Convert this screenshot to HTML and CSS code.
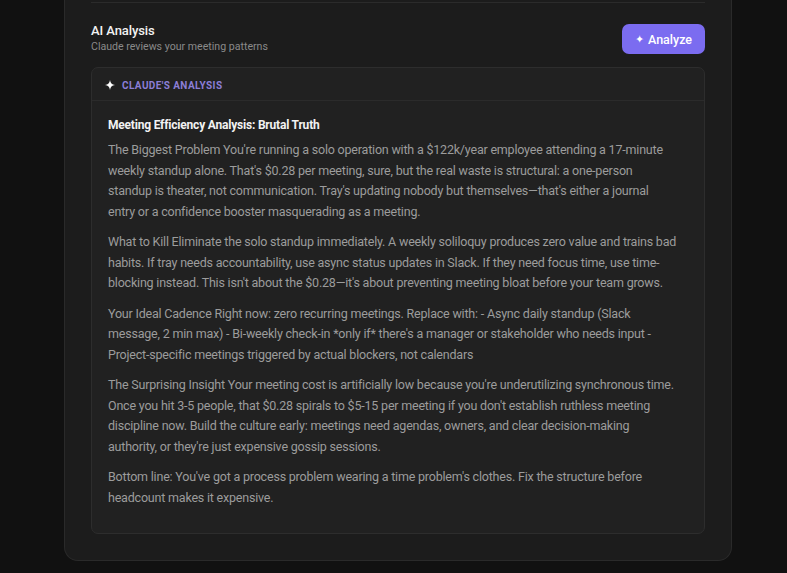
FILE: index.html
```html
<!DOCTYPE html>
<html lang="en">
<head>
<meta charset="utf-8">
<title>AI Analysis</title>
<link rel="stylesheet" href="styles.css">
</head>
<body>
<div class="page">
  <section class="card">
    <div class="prev-divider"></div>
    <div class="section-head">
      <div class="titles">
        <h2 class="title">AI Analysis</h2>
        <p class="subtitle">Claude reviews your meeting patterns</p>
      </div>
      <button class="analyze-btn" type="button"><span class="btn-spark">✦</span> Analyze</button>
    </div>
    <div class="analysis">
      <div class="analysis-head">
        <svg class="spark" viewBox="0 0 10 10" width="10" height="10" aria-hidden="true">
          <path d="M5 0 C5.4 3.2 6.8 4.6 10 5 C6.8 5.4 5.4 6.8 5 10 C4.6 6.8 3.2 5.4 0 5 C3.2 4.6 4.6 3.2 5 0 Z" fill="#ffffff"/>
        </svg>
        <span class="analysis-label">CLAUDE'S ANALYSIS</span>
      </div>
      <div class="analysis-body">
        <h3 class="analysis-title">Meeting Efficiency Analysis: Brutal Truth</h3>
        <p>The Biggest Problem You're running a solo operation with a $122k/year employee attending a 17-minute<br>weekly standup alone. That's $0.28 per meeting, sure, but the real waste is structural: a one-person<br>standup is theater, not communication. Tray's updating nobody but themselves—that's either a journal<br>entry or a confidence booster masquerading as a meeting.</p>
        <p>What to Kill Eliminate the solo standup immediately. A weekly soliloquy produces zero value and trains bad<br>habits. If tray needs accountability, use async status updates in Slack. If they need focus time, use time-<br>blocking instead. This isn't about the $0.28—it's about preventing meeting bloat before your team grows.</p>
        <p>Your Ideal Cadence Right now: zero recurring meetings. Replace with: - Async daily standup (Slack<br>message, 2 min max) - Bi-weekly check-in *only if* there's a manager or stakeholder who needs input -<br>Project-specific meetings triggered by actual blockers, not calendars</p>
        <p>The Surprising Insight Your meeting cost is artificially low because you're underutilizing synchronous time.<br>Once you hit 3-5 people, that $0.28 spirals to $5-15 per meeting if you don't establish ruthless meeting<br>discipline now. Build the culture early: meetings need agendas, owners, and clear decision-making<br>authority, or they're just expensive gossip sessions.</p>
        <p>Bottom line: You've got a process problem wearing a time problem's clothes. Fix the structure before<br>headcount makes it expensive.</p>
      </div>
    </div>
  </section>
</div>
</body>
</html>
```

FILE: styles.css
```css
* { box-sizing: border-box; }
html, body { margin: 0; padding: 0; }
body {
  background: #111111;
  font-family: Roboto, "Noto Sans", sans-serif;
  color: #e8e8e8;
  width: 787px;
  height: 573px;
  overflow: hidden;
}
.page {
  padding: 0 55px 0 64px;
}
.card {
  width: 668px;
  background: #1c1c1c;
  border: 1px solid #2a2a2a;
  border-top: none;
  border-radius: 0 0 14px 14px;
  padding: 0 26px 26px 26px;
}
.prev-divider {
  height: 3px;
  border-bottom: 1px solid #2b2b2b;
}
.section-head {
  display: flex;
  justify-content: space-between;
  align-items: flex-start;
  padding-top: 20px;
  height: 64px;
}
.title {
  margin: 0;
  font-size: 13px;
  font-weight: 500;
  line-height: 16px;
  letter-spacing: -0.1px;
  color: #f2f2f2;
}
.subtitle {
  margin: 1px 0 0;
  font-size: 10.6px;
  line-height: 14px;
  color: #8a8a8a;
}
.analyze-btn {
  height: 30px;
  width: 83px;
  margin-top: 1px;
  border: none;
  border-radius: 7px;
  background: #7b6cf0;
  color: #ffffff;
  font-family: inherit;
  font-size: 12.5px;
  font-weight: 500;
  display: flex;
  align-items: center;
  justify-content: center;
  gap: 4px;
  padding: 0;
}
.btn-spark { font-size: 11px; }
.analysis {
  background: #212121;
  border: 1px solid #2d2d2d;
  border-radius: 7px;
}
.analysis-head {
  display: flex;
  align-items: center;
  gap: 7px;
  height: 33px;
  padding: 2px 13px 0;
  border-bottom: 1px solid #2b2b2b;
}
.spark { display: block; }
.analysis-label {
  font-size: 10px;
  font-weight: 700;
  letter-spacing: 0.4px;
  color: #8b7ed6;
}
.analysis-body {
  padding: 15px 16px 15px 16px;
}
.analysis-title {
  margin: 0 0 6px;
  font-size: 12px;
  font-weight: 700;
  line-height: 18px;
  letter-spacing: -0.2px;
  color: #f2f2f2;
}
.analysis-body p {
  margin: 0 0 10px;
  font-size: 12.5px;
  line-height: 20.5px;
  letter-spacing: -0.2px;
  white-space: nowrap;
  color: #9c9c9c;
}
```
